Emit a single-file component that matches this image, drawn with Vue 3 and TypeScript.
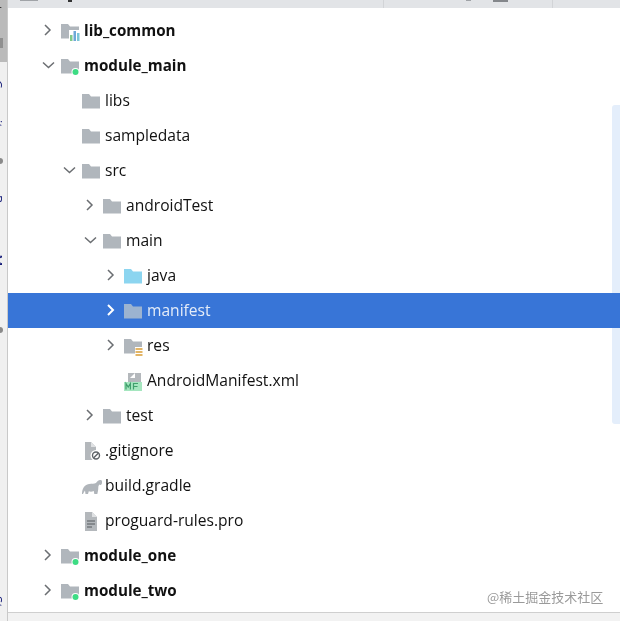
<template>
  <div class="window">
    <div class="rail">
      <div class="rail-active"></div>
      <div class="rail-thumb"></div>
      <div class="rail-label rail-label-project">Project</div>
      <div class="rail-label rail-label-a">Commit</div>
      <div class="rail-label rail-label-b">Resource Manager</div>
      <div class="rail-label rail-label-c">Structure</div>
      <div class="rail-dot rail-dot-a"></div>
      <div class="rail-dot rail-dot-b"></div>
    </div>
    <div class="content">
      <div class="top-bar">
        <span class="top-mark top-mark-a"></span>
        <span class="top-caret"></span>
        <span class="top-sep top-sep-a"></span>
        <span class="top-mark top-mark-b"></span>
        <span class="top-mark top-mark-c"></span>
        <span class="top-sep top-sep-b"></span>
      </div>
      <div class="tree">
        <div
          v-for="row in rows"
          :key="row.label"
          class="row"
          :class="{ selected: row.selected, strong: row.bold }"
          :style="{ paddingLeft: 33 + row.level * 21 + 'px' }"
        >
          <svg class="chevron" width="14" height="14" viewBox="0 0 14 14">
            <path v-if="row.arrow === 'closed'" d="M4 2l5 5-5 5" />
            <path v-else-if="row.arrow === 'open'" d="M2 4.500l5.500 5 5.500-5" />
          </svg>
          <svg class="icon" width="21" height="20" viewBox="0 0 21 20">
            <template v-if="row.icon === 'folder' || row.icon === 'module' || row.icon === 'lib' || row.icon === 'res' || row.icon === 'java'">
              <path class="folder" :class="row.icon" d="M1 3h7l2 2.500h9V17.500H1z" />
            </template>
            <template v-if="row.icon === 'module'">
              <circle cx="15.500" cy="16" r="4" fill="#fff" />
              <circle cx="15.500" cy="16" r="3" fill="#3ddc84" />
            </template>
            <template v-if="row.icon === 'lib'">
              <path d="M9 9h12v11H9z" fill="#fff" />
              <rect x="10" y="14" width="2.500" height="6" fill="#7fc98a" />
              <rect x="13.500" y="10" width="2.500" height="10" fill="#6fa8d8" />
              <rect x="17" y="12" width="2.500" height="8" fill="#7cc6d8" />
            </template>
            <template v-if="row.icon === 'res'">
              <path d="M12 11h8v9h-8z" fill="#fff" />
              <path d="M12.500 12h7v2h-7zM12.500 15h7v2h-7zM12.500 18h7v2h-7z" fill="#e3b566" />
            </template>
            <template v-if="row.icon === 'manifest'">
              <path d="M5 2h13v9H5z" fill="#b4b8bc" />
              <path d="M12 2v5H7z" fill="#fff" />
              <rect x="1" y="11" width="18" height="9" fill="#a5e6bf" />
              <path class="mf" d="M3 18.500v-6l2.200 3.500 2.200-3.500v6M10.500 18.500v-6h4.500M10.500 15.500h4" />
            </template>
            <template v-if="row.icon === 'ignore'">
              <path d="M4 1h6l5 5v13H4z" fill="#b4b8bc" />
              <path d="M10 1v5h5z" fill="#dfe1e3" />
              <circle cx="15" cy="14.500" r="5.500" fill="#fff" />
              <circle cx="15" cy="14.500" r="3.500" fill="none" stroke="#5f6469" stroke-width="1.400" />
              <path d="m12.500 17 5-5" stroke="#5f6469" stroke-width="1.400" />
            </template>
            <template v-if="row.icon === 'gradle'">
              <path d="M1 18c0-5 2-9 7-10 3-.5 5 0 7-1 1-2 3-3.500 5-3 1.500.6 1.500 3 .3 4.500-.8.800-1.500.500-2 0-.5 1-1 1.500-1 3 0 2.500-.5 4.500-1 6.500h-3l-.5-3c-2 .8-3.500.8-5 .2l-.8 2.800H4.500l-.5-3.500c-.8 1-1.500 2.500-2 3.500z" fill="#b0b5ba" />
            </template>
            <template v-if="row.icon === 'text'">
              <path d="M4 1h7l5 5v14H4z" fill="#b4b8bc" />
              <path d="M11 1v5h5z" fill="#dfe1e3" />
              <path d="M6 10h8M6 13h8M6 16h5" stroke="#54585c" stroke-width="1.200" />
            </template>
          </svg>
          <span class="label">{{ row.label }}</span>
        </div>
      </div>
      <div class="scroll-thumb"></div>
      <div class="watermark">@稀土掘金技术社区</div>
      <div class="bottom-bar"></div>
    </div>
  </div>
</template>

<script setup lang="ts">
type Arrow = 'closed' | 'open' | 'none'

interface Row {
  label: string
  level: number
  icon: string
  arrow: Arrow
  bold?: boolean
  selected?: boolean
}

const rows: Row[] = [
  { label: 'lib_common', level: 0, icon: 'lib', arrow: 'closed', bold: true },
  { label: 'module_main', level: 0, icon: 'module', arrow: 'open', bold: true },
  { label: 'libs', level: 1, icon: 'folder', arrow: 'none' },
  { label: 'sampledata', level: 1, icon: 'folder', arrow: 'none' },
  { label: 'src', level: 1, icon: 'folder', arrow: 'open' },
  { label: 'androidTest', level: 2, icon: 'folder', arrow: 'closed' },
  { label: 'main', level: 2, icon: 'folder', arrow: 'open' },
  { label: 'java', level: 3, icon: 'java', arrow: 'closed' },
  { label: 'manifest', level: 3, icon: 'folder', arrow: 'closed', selected: true },
  { label: 'res', level: 3, icon: 'res', arrow: 'closed' },
  { label: 'AndroidManifest.xml', level: 3, icon: 'manifest', arrow: 'none' },
  { label: 'test', level: 2, icon: 'folder', arrow: 'closed' },
  { label: '.gitignore', level: 1, icon: 'ignore', arrow: 'none' },
  { label: 'build.gradle', level: 1, icon: 'gradle', arrow: 'none' },
  { label: 'proguard-rules.pro', level: 1, icon: 'text', arrow: 'none' },
  { label: 'module_one', level: 0, icon: 'module', arrow: 'closed', bold: true },
  { label: 'module_two', level: 0, icon: 'module', arrow: 'closed', bold: true },
]
</script>

<style scoped>
.window {
  width: 620px;
  height: 621px;
  display: flex;
  overflow: hidden;
  background: #fff;
  font-family: "Open Sans", "Noto Sans", sans-serif;
  font-size: 15.6px;
  color: #111;
  filter: blur(0.35px);
}

.rail {
  width: 7px;
  flex: none;
  position: relative;
  overflow: hidden;
  background: #f0f0f0;
  border-right: 1px solid #c9c9c9;
}

.rail-active {
  position: absolute;
  top: 0;
  left: 0;
  width: 7px;
  height: 62px;
  background: #bababa;
}

.rail-thumb {
  position: absolute;
  top: 38px;
  left: 0;
  width: 3px;
  height: 10px;
  background: #8f8f8f;
}

.rail-dot {
  position: absolute;
  left: 0;
  width: 3px;
  height: 6px;
  border-radius: 0 3px 3px 0;
  background: #8a8a8a;
}

.rail-dot-a {
  top: 158px;
}

.rail-dot-b {
  top: 327px;
}

.rail-label {
  position: absolute;
  left: -9px;
  width: 13px;
  writing-mode: vertical-rl;
  white-space: nowrap;
  font-size: 13px;
  line-height: 13px;
  color: #141b78;
}

.rail-label-project {
  top: -32px;
  color: #222;
}

.rail-label-a {
  top: 80px;
}

.rail-label-b {
  top: 195px;
}

.rail-label-c {
  top: 596px;
}

.content {
  flex: 1;
  min-width: 0;
  display: flex;
  flex-direction: column;
  position: relative;
}

.top-bar {
  height: 8px;
  flex: none;
  position: relative;
  background: #e2e4e7;
}

.top-mark,
.top-caret,
.top-sep {
  position: absolute;
  top: 0;
}

.top-mark {
  height: 1px;
  background: #a0a3a7;
}

.top-mark-a {
  left: 12px;
  width: 18px;
}

.top-mark-b {
  left: 458px;
  width: 5px;
}

.top-mark-c {
  left: 485px;
  width: 15px;
  height: 2px;
  background: #84878b;
}

.top-caret {
  left: 60px;
  width: 4px;
  height: 2px;
  background: #333;
}

.top-sep {
  width: 1px;
  height: 8px;
  background: #d2d4d7;
}

.top-sep-a {
  left: 375px;
}

.top-sep-b {
  left: 544px;
}

.tree {
  flex: 1;
  min-height: 0;
  padding-top: 5px;
}

.row {
  height: 35px;
  display: flex;
  align-items: center;
  white-space: nowrap;
}

.label {
  margin-bottom: 2px;
}

.row.strong .label {
  font-size: 15.2px;
  font-weight: 700;
}

.row.selected {
  position: relative;
  z-index: 1;
  background: #3875d7;
  color: #e4ecf8;
}

.chevron {
  flex: none;
  margin-top: -1px;
  margin-right: 5px;
}

.chevron path {
  fill: none;
  stroke: #6b6e72;
  stroke-width: 1.500;
}

.row.selected .chevron path {
  stroke: #fff;
  stroke-width: 2;
}

.icon {
  flex: none;
  margin-right: 3px;
}

.folder {
  fill: #b0b6bc;
}

.folder.java {
  fill: #8cd5f0;
}

.row.selected .folder {
  fill: #9cb3d0;
}

.mf {
  fill: none;
  stroke: #3f9f6c;
  stroke-width: 1.200;
}

.scroll-thumb {
  position: absolute;
  top: 105px;
  right: 0;
  width: 8px;
  height: 319px;
  border-radius: 3px 0 0 3px;
  background: #e4eefb;
}

.watermark {
  position: absolute;
  top: 588px;
  left: 479px;
  font-family: "Noto Sans CJK SC", sans-serif;
  font-size: 13px;
  line-height: 18px;
  color: #9a9a9a;
  white-space: nowrap;
}

.bottom-bar {
  height: 8px;
  flex: none;
  background: #f2f2f2;
  border-top: 1px solid #cfcfcf;
}
</style>
